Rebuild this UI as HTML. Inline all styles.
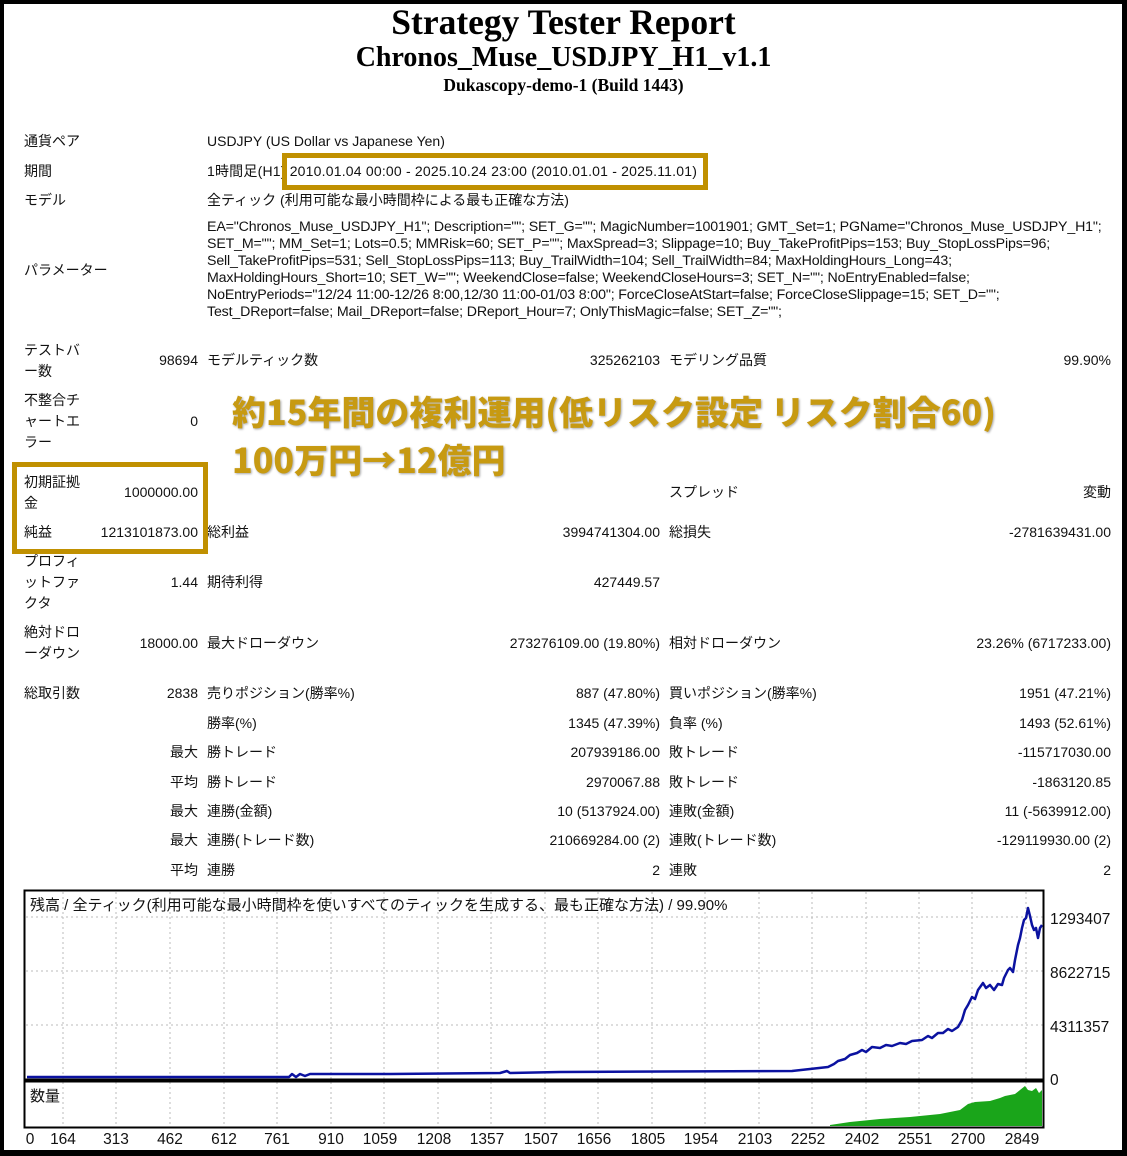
<!DOCTYPE html>
<html><head><meta charset="utf-8"><style>
*{margin:0;padding:0;box-sizing:border-box}
body{width:1127px;height:1156px;background:#000;position:relative;overflow:hidden;font-family:"Liberation Sans","Noto Sans CJK JP",sans-serif;font-size:14px;color:#111}
#pg{position:absolute;left:4px;top:4px;width:1118px;height:1146px;background:#fff}
.t{position:absolute;white-space:nowrap;line-height:20px}
.r{text-align:right}
.c{position:absolute;left:0;width:1127px;text-align:center;font-family:"Liberation Serif",serif;font-weight:bold;color:#000}
.box{position:absolute;border:5px solid #C09000}
.big{position:absolute;font-family:"Noto Sans CJK JP",sans-serif;font-weight:900;color:#C79A12;font-size:34px;line-height:44px;white-space:nowrap;text-shadow:1px 1px 2px rgba(0,0,0,.35)}
</style></head><body>
<div id="pg"></div>
<div class="c" style="top:2px;font-size:35.5px;line-height:40px">Strategy Tester Report</div>
<div class="c" style="top:42px;font-size:28px;line-height:32px">Chronos_Muse_USDJPY_H1_v1.1</div>
<div class="c" style="top:75px;font-size:17.5px;line-height:20px">Dukascopy-demo-1 (Build 1443)</div>

<div class="t" style="left:24px;top:131px">通貨ペア</div>
<div class="t" style="left:207px;top:131px">USDJPY (US Dollar vs Japanese Yen)</div>
<div class="t" style="left:24px;top:161px">期間</div>
<div class="t" style="left:207px;top:161px;letter-spacing:0.2px">1時間足(H1) 2010.01.04 00:00 - 2025.10.24 23:00 (2010.01.01 - 2025.11.01)</div>
<div class="box" style="left:282px;top:153px;width:426px;height:37px"></div>
<div class="t" style="left:24px;top:190px">モデル</div>
<div class="t" style="left:207px;top:190px">全ティック (利用可能な最小時間枠による最も正確な方法)</div>
<div class="t" style="left:24px;top:260px">パラメーター</div>
<div class="t" style="left:207px;top:219px;line-height:17px;font-size:14.2px;letter-spacing:-0.15px">EA="Chronos_Muse_USDJPY_H1"; Description=""; SET_G=""; MagicNumber=1001901; GMT_Set=1; PGName="Chronos_Muse_USDJPY_H1";<br>SET_M=""; MM_Set=1; Lots=0.5; MMRisk=60; SET_P=""; MaxSpread=3; Slippage=10; Buy_TakeProfitPips=153; Buy_StopLossPips=96;<br>Sell_TakeProfitPips=531; Sell_StopLossPips=113; Buy_TrailWidth=104; Sell_TrailWidth=84; MaxHoldingHours_Long=43;<br>MaxHoldingHours_Short=10; SET_W=""; WeekendClose=false; WeekendCloseHours=3; SET_N=""; NoEntryEnabled=false;<br>NoEntryPeriods="12/24 11:00-12/26 8:00,12/30 11:00-01/03 8:00"; ForceCloseAtStart=false; ForceCloseSlippage=15; SET_D="";<br>Test_DReport=false; Mail_DReport=false; DReport_Hour=7; OnlyThisMagic=false; SET_Z="";</div>

<div class="t" style="left:24px;top:340px;line-height:21px">テストバ<br>ー数</div>
<div class="t r" style="left:100px;width:98px;top:350px">98694</div>
<div class="t" style="left:207px;top:350px">モデルティック数</div>
<div class="t r" style="left:500px;width:160px;top:350px">325262103</div>
<div class="t" style="left:669px;top:350px">モデリング品質</div>
<div class="t r" style="left:900px;width:211px;top:350px">99.90%</div>

<div class="t" style="left:24px;top:390px;line-height:21px">不整合チ<br>ャートエ<br>ラー</div>
<div class="t r" style="left:100px;width:98px;top:411px">0</div>
<div class="big" style="left:232px;top:389px">約15年間の複利運用(低リスク設定 リスク割合60)</div>
<div class="big" style="left:232px;top:437px">100万円→12億円</div>

<div class="t" style="left:24px;top:472px;line-height:21px">初期証拠<br>金</div>
<div class="t r" style="left:100px;width:98px;top:482px">1000000.00</div>
<div class="t" style="left:669px;top:482px">スプレッド</div>
<div class="t r" style="left:900px;width:211px;top:482px">変動</div>
<div class="t" style="left:24px;top:522px">純益</div>
<div class="t r" style="left:60px;width:138px;top:522px">1213101873.00</div>
<div class="t" style="left:207px;top:522px">総利益</div>
<div class="t r" style="left:500px;width:160px;top:522px">3994741304.00</div>
<div class="t" style="left:669px;top:522px">総損失</div>
<div class="t r" style="left:900px;width:211px;top:522px">-2781639431.00</div>
<div class="box" style="left:12px;top:462px;width:196px;height:92px"></div>

<div class="t" style="left:24px;top:551px;line-height:21px">プロフィ<br>ットファ<br>クタ</div>
<div class="t r" style="left:100px;width:98px;top:572px">1.44</div>
<div class="t" style="left:207px;top:572px">期待利得</div>
<div class="t r" style="left:500px;width:160px;top:572px">427449.57</div>

<div class="t" style="left:24px;top:622px;line-height:21px">絶対ドロ<br>ーダウン</div>
<div class="t r" style="left:100px;width:98px;top:633px">18000.00</div>
<div class="t" style="left:207px;top:633px">最大ドローダウン</div>
<div class="t r" style="left:440px;width:220px;top:633px">273276109.00 (19.80%)</div>
<div class="t" style="left:669px;top:633px">相対ドローダウン</div>
<div class="t r" style="left:900px;width:211px;top:633px">23.26% (6717233.00)</div>

<div class="t" style="left:24px;top:683px">総取引数</div>
<div class="t r" style="left:100px;width:98px;top:683px">2838</div>
<div class="t" style="left:207px;top:683px">売りポジション(勝率%)</div>
<div class="t r" style="left:440px;width:220px;top:683px">887 (47.80%)</div>
<div class="t" style="left:669px;top:683px">買いポジション(勝率%)</div>
<div class="t r" style="left:900px;width:211px;top:683px">1951 (47.21%)</div>

<div class="t" style="left:207px;top:713px">勝率(%)</div>
<div class="t r" style="left:440px;width:220px;top:713px">1345 (47.39%)</div>
<div class="t" style="left:669px;top:713px">負率 (%)</div>
<div class="t r" style="left:900px;width:211px;top:713px">1493 (52.61%)</div>

<div class="t r" style="left:100px;width:98px;top:742px">最大</div>
<div class="t" style="left:207px;top:742px">勝トレード</div>
<div class="t r" style="left:440px;width:220px;top:742px">207939186.00</div>
<div class="t" style="left:669px;top:742px">敗トレード</div>
<div class="t r" style="left:900px;width:211px;top:742px">-115717030.00</div>

<div class="t r" style="left:100px;width:98px;top:772px">平均</div>
<div class="t" style="left:207px;top:772px">勝トレード</div>
<div class="t r" style="left:440px;width:220px;top:772px">2970067.88</div>
<div class="t" style="left:669px;top:772px">敗トレード</div>
<div class="t r" style="left:900px;width:211px;top:772px">-1863120.85</div>

<div class="t r" style="left:100px;width:98px;top:801px">最大</div>
<div class="t" style="left:207px;top:801px">連勝(金額)</div>
<div class="t r" style="left:440px;width:220px;top:801px">10 (5137924.00)</div>
<div class="t" style="left:669px;top:801px">連敗(金額)</div>
<div class="t r" style="left:900px;width:211px;top:801px">11 (-5639912.00)</div>

<div class="t r" style="left:100px;width:98px;top:830px">最大</div>
<div class="t" style="left:207px;top:830px">連勝(トレード数)</div>
<div class="t r" style="left:440px;width:220px;top:830px">210669284.00 (2)</div>
<div class="t" style="left:669px;top:830px">連敗(トレード数)</div>
<div class="t r" style="left:900px;width:211px;top:830px">-129119930.00 (2)</div>

<div class="t r" style="left:100px;width:98px;top:860px">平均</div>
<div class="t" style="left:207px;top:860px">連勝</div>
<div class="t r" style="left:440px;width:220px;top:860px">2</div>
<div class="t" style="left:669px;top:860px">連敗</div>
<div class="t r" style="left:900px;width:211px;top:860px">2</div>

<svg style="position:absolute;left:0;top:0" width="1127" height="1156" font-family="Liberation Sans, Noto Sans CJK JP, sans-serif">
<g stroke="#bbb" stroke-dasharray="2,3" stroke-width="1">
<line x1="63" y1="892" x2="63" y2="1127"/><line x1="116" y1="892" x2="116" y2="1127"/><line x1="170" y1="892" x2="170" y2="1127"/><line x1="224" y1="892" x2="224" y2="1127"/><line x1="277" y1="892" x2="277" y2="1127"/><line x1="331" y1="892" x2="331" y2="1127"/><line x1="384" y1="892" x2="384" y2="1127"/><line x1="438" y1="892" x2="438" y2="1127"/><line x1="491" y1="892" x2="491" y2="1127"/><line x1="545" y1="892" x2="545" y2="1127"/><line x1="598" y1="892" x2="598" y2="1127"/><line x1="652" y1="892" x2="652" y2="1127"/><line x1="705" y1="892" x2="705" y2="1127"/><line x1="759" y1="892" x2="759" y2="1127"/><line x1="812" y1="892" x2="812" y2="1127"/><line x1="866" y1="892" x2="866" y2="1127"/><line x1="919" y1="892" x2="919" y2="1127"/><line x1="972" y1="892" x2="972" y2="1127"/><line x1="1026" y1="892" x2="1026" y2="1127"/>
<line x1="26" y1="917" x2="1043" y2="917"/><line x1="26" y1="971" x2="1043" y2="971"/><line x1="26" y1="1025" x2="1043" y2="1025"/>
</g>
<rect x="24.5" y="890.5" width="1019" height="189" fill="none" stroke="#000" stroke-width="2"/>
<rect x="24.5" y="1081.5" width="1019" height="46" fill="none" stroke="#000" stroke-width="2"/>
<path d="M27,1077 L289,1077 L292,1074 L296,1077 L300,1074 L305,1076 L310,1074 L390,1074 L500,1073 L507,1071 L510,1073 L560,1072 L792,1071 L828,1067 L834,1064 L838,1061 L845,1059 L850,1055 L857,1053 L862,1050 L866,1052 L872,1047 L880,1048 L886,1045 L892,1046 L900,1043 L906,1044 L912,1041 L922,1040 L928,1036 L932,1038 L938,1033 L943,1033 L948,1029 L952,1031 L958,1027 L962,1020 L965,1010 L968,1005 L972,997 L975,999 L978,990 L983,983 L986,988 L990,985 L994,990 L998,984 L1002,985 L1004,978 L1008,970 L1010,968 L1013,972 L1015,960 L1018,945 L1020,938 L1022,928 L1024,920 L1026,918 L1028,908 L1030,916 L1032,925 L1034,930 L1036,928 L1038,938 L1040,928 L1042,925" fill="none" stroke="#0b12a0" stroke-width="2.5" stroke-linejoin="round"/>
<path d="M830,1125 L850,1122 L880,1119 L910,1117 L940,1114 L960,1110 L968,1104 L975,1102 L990,1101 L1000,1098 L1005,1096 L1015,1094 L1020,1090 L1025,1086 L1028,1090 L1032,1091 L1036,1088 L1039,1093 L1042,1090 L1042,1126 L830,1126 Z" fill="#1aa51a"/>
<text x="30" y="910" font-size="15" fill="#111">残高 / 全ティック(利用可能な最小時間枠を使いすべてのティックを生成する、最も正確な方法) / 99.90%</text>
<text x="30" y="1101" font-size="15" fill="#111">数量</text>
<g font-size="15.5" fill="#111">
<text x="1050" y="924">1293407</text><text x="1050" y="978">8622715</text><text x="1050" y="1032">4311357</text><text x="1050" y="1085">0</text>
</g>
<g font-size="15.5" fill="#111" text-anchor="middle">
<text x="30" y="1144">0</text><text x="63" y="1144">164</text><text x="116" y="1144">313</text><text x="170" y="1144">462</text><text x="224" y="1144">612</text><text x="277" y="1144">761</text><text x="331" y="1144">910</text><text x="380" y="1144">1059</text><text x="434" y="1144">1208</text><text x="487" y="1144">1357</text><text x="541" y="1144">1507</text><text x="594" y="1144">1656</text><text x="648" y="1144">1805</text><text x="701" y="1144">1954</text><text x="755" y="1144">2103</text><text x="808" y="1144">2252</text><text x="862" y="1144">2402</text><text x="915" y="1144">2551</text><text x="968" y="1144">2700</text><text x="1022" y="1144">2849</text>
</g>
</svg>
</body></html>
